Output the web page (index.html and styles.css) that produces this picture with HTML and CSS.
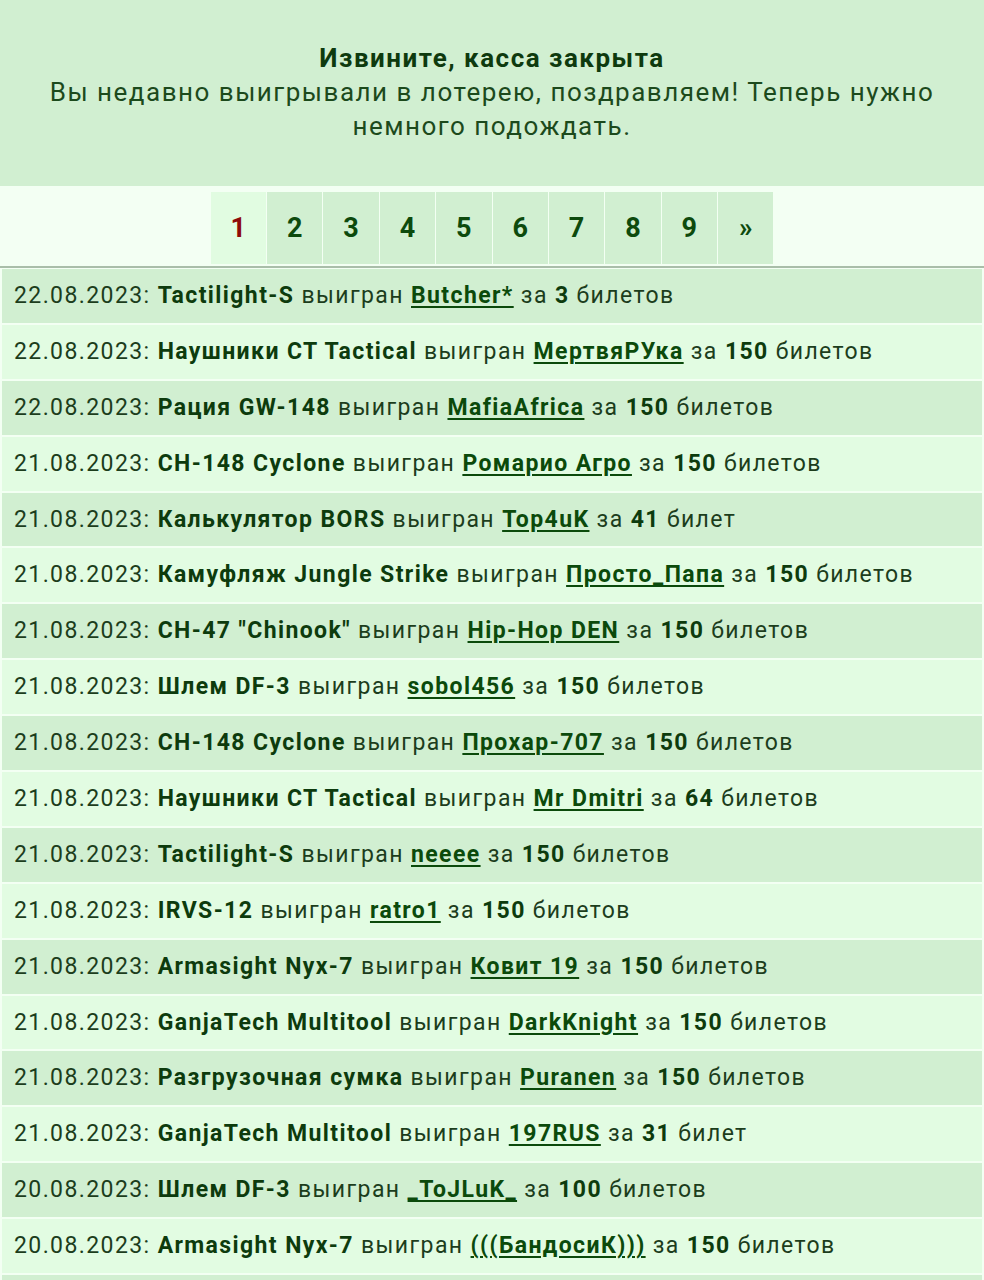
FILE: index.html
```html
<!DOCTYPE html>
<html lang="ru">
<head>
  <meta charset="UTF-8" />
  <meta name="viewport" content="width=device-width, initial-scale=1.0" />
  <title>Лотерея</title>
  <link rel="stylesheet" href="styles.css">
</head>
<body>
  <div class="notice">
    <b>Извините, касса закрыта</b><br>
    Вы недавно выигрывали в лотерею, поздравляем! Теперь нужно немного подождать.
  </div>

  <div class="pager">
    <span class="page current">1</span>
    <a class="page" href="#">2</a>
    <a class="page" href="#">3</a>
    <a class="page" href="#">4</a>
    <a class="page" href="#">5</a>
    <a class="page" href="#">6</a>
    <a class="page" href="#">7</a>
    <a class="page" href="#">8</a>
    <a class="page" href="#">9</a>
    <a class="page" href="#">&raquo;</a>
  </div>

  <div class="winners">
    <div class="row">22.08.2023: <b>Tactilight-S</b> выигран <a href="#">Butcher*</a> за <b>3</b> билетов</div>
    <div class="row">22.08.2023: <b>Наушники CT Tactical</b> выигран <a href="#">МертвяРУка</a> за <b>150</b> билетов</div>
    <div class="row">22.08.2023: <b>Рация GW-148</b> выигран <a href="#">MafiaAfrica</a> за <b>150</b> билетов</div>
    <div class="row">21.08.2023: <b>CH-148 Cyclone</b> выигран <a href="#">Ромарио Агро</a> за <b>150</b> билетов</div>
    <div class="row">21.08.2023: <b>Калькулятор BORS</b> выигран <a href="#">Top4uK</a> за <b>41</b> билет</div>
    <div class="row">21.08.2023: <b>Камуфляж Jungle Strike</b> выигран <a href="#">Просто_Папа</a> за <b>150</b> билетов</div>
    <div class="row">21.08.2023: <b>CH-47 "Chinook"</b> выигран <a href="#">Hip-Hop DEN</a> за <b>150</b> билетов</div>
    <div class="row">21.08.2023: <b>Шлем DF-3</b> выигран <a href="#">sobol456</a> за <b>150</b> билетов</div>
    <div class="row">21.08.2023: <b>CH-148 Cyclone</b> выигран <a href="#">Прохар-707</a> за <b>150</b> билетов</div>
    <div class="row">21.08.2023: <b>Наушники CT Tactical</b> выигран <a href="#">Mr Dmitri</a> за <b>64</b> билетов</div>
    <div class="row">21.08.2023: <b>Tactilight-S</b> выигран <a href="#">neeee</a> за <b>150</b> билетов</div>
    <div class="row">21.08.2023: <b>IRVS-12</b> выигран <a href="#">ratro1</a> за <b>150</b> билетов</div>
    <div class="row">21.08.2023: <b>Armasight Nyx-7</b> выигран <a href="#">Ковит 19</a> за <b>150</b> билетов</div>
    <div class="row">21.08.2023: <b>GanjaTech Multitool</b> выигран <a href="#">DarkKnight</a> за <b>150</b> билетов</div>
    <div class="row">21.08.2023: <b>Разгрузочная сумка</b> выигран <a href="#">Puranen</a> за <b>150</b> билетов</div>
    <div class="row">21.08.2023: <b>GanjaTech Multitool</b> выигран <a href="#">197RUS</a> за <b>31</b> билет</div>
    <div class="row">20.08.2023: <b>Шлем DF-3</b> выигран <a href="#">_ToJLuK_</a> за <b>100</b> билетов</div>
    <div class="row">20.08.2023: <b>Armasight Nyx-7</b> выигран <a href="#">(((БандосиК)))</a> за <b>150</b> билетов</div>
    <div class="row"></div>
  </div>
</body>
</html>
```

FILE: styles.css
```css
* {
  margin: 0;
  padding: 0;
  box-sizing: border-box;
}
body {
  font-family: Roboto, "Noto Sans", Arial, sans-serif;
  background: #f3fff3;
  color: #1c3d1c;
  overflow: hidden;
}
b {
  color: #0d3b0d;
}

/* closed cash desk message */
.notice {
  background: #d1efd1;
  height: 186px;
  padding: 41px 30px 0;
  text-align: center;
  font-size: 26px;
  line-height: 34px;
  letter-spacing: 1.5px;
  color: #1c4a1c;
}
.notice b {
  color: #0e3a0e;
}

/* page numbers */
.pager {
  display: flex;
  justify-content: center;
  gap: 1px;
  padding: 5px 0 2px;
  margin-top: 1px;
  border-bottom: 2px solid #a9bea9;
}
.page {
  width: 55.4px;
  height: 72px;
  display: flex;
  align-items: center;
  justify-content: center;
  background: #d1efd1;
  color: #0d4a0d;
  font-size: 27px;
  font-weight: bold;
  text-decoration: none;
}
.page.current {
  background: #e1fce1;
  color: #8e0a0a;
}

/* list of winners */
.winners {
  padding: 1px 2px 0;
}
.row {
  height: 53.9px;
  margin-bottom: 2px;
  padding: 0 12px;
  font-size: 23px;
  line-height: 54px;
  letter-spacing: 1.4px;
  white-space: nowrap;
  background: #e2fce2;
}
.row:nth-child(odd) {
  background: #d1efd1;
}
.row a {
  color: #0b4a0b;
  font-weight: bold;
  text-decoration: underline;
  text-decoration-thickness: 2px;
  text-underline-offset: 3px;
}
```
